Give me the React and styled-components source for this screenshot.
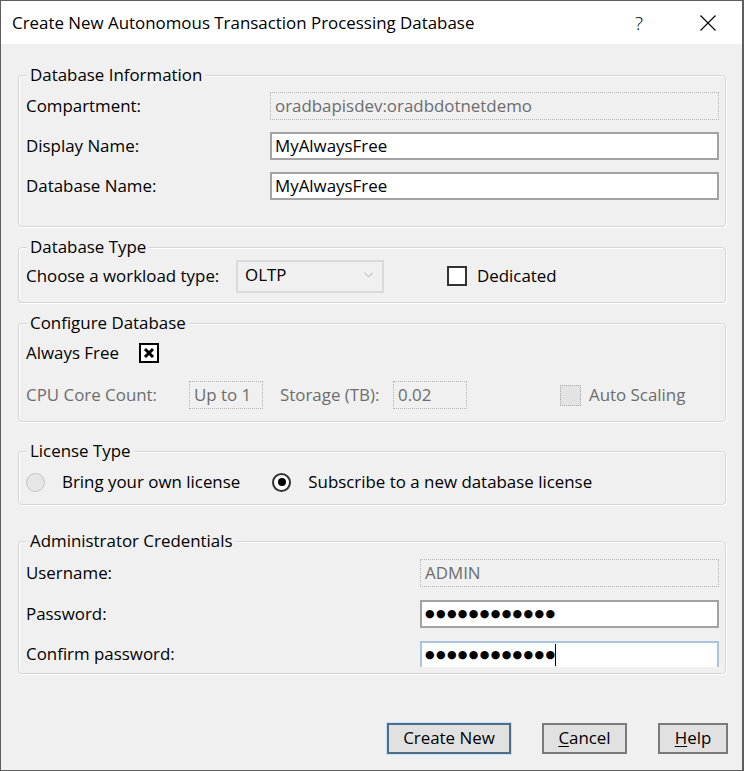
import React from 'react';
import styled, { createGlobalStyle } from 'styled-components';

const GlobalStyle = createGlobalStyle`
  html, body {
    margin: 0;
    padding: 0;
    background: #f0f0f0;
  }
  body {
    font-family: "Open Sans", "Noto Sans", sans-serif;
    font-size: 16.9px;
    color: #000;
  }
  * {
    box-sizing: border-box;
  }
`;

const Window = styled.div`
  width: 744px;
  height: 771px;
  border: 1px solid #5e5e5e;
  border-right-width: 2px;
  background: #f0f0f0;
  display: flex;
  flex-direction: column;
  overflow: hidden;
`;

const TitleBar = styled.div`
  height: 43px;
  flex-shrink: 0;
  background: #fff;
  display: flex;
  align-items: center;
  padding-left: 11px;
  padding-right: 26px;
`;

const Title = styled.div`
  flex: 1;
  line-height: 22px;
`;

const HelpGlyph = styled.span`
  font-size: 19px;
  font-weight: 300;
  line-height: 22px;
  margin-right: 57px;
`;

const Body = styled.div`
  flex: 1;
  display: flex;
  flex-direction: column;
  padding: 20px 16px 0 17px;
`;

const Group = styled.fieldset`
  margin: ${(p) => p.$mt || 0}px 0 0;
  padding: 0 6px ${(p) => p.$pb || 0}px 7px;
  border: 1px solid #d6d6d6;
  border-radius: 4px;
  box-shadow: inset 1px 1px 0 #fff, 1px 1px 0 #fff;
  min-width: 0;
`;

const Legend = styled.legend`
  margin-left: 1px;
  padding: 0 3px;
  line-height: 22px;
  background: #f0f0f0;
`;

const FormRow = styled.div`
  display: flex;
  align-items: center;
  height: ${(p) => p.$h || 40}px;
  margin-top: ${(p) => p.$mt || 0}px;
`;

const Label = styled.span`
  flex-shrink: 0;
  width: ${(p) => (p.$w ? `${p.$w}px` : 'auto')};
  margin-left: ${(p) => p.$ml || 0}px;
  color: ${(p) => (p.$disabled ? '#6d6d6d' : '#000')};
  line-height: 22px;
  white-space: nowrap;
`;

const TextBox = styled.div`
  flex: ${(p) => (p.$w ? 'none' : 1)};
  width: ${(p) => (p.$w ? `${p.$w}px` : 'auto')};
  height: ${(p) => (p.$clipped ? 26 : 28)}px;
  align-self: ${(p) => (p.$clipped ? 'flex-start' : 'center')};
  margin-top: ${(p) => (p.$clipped ? 7 : 0)}px;
  display: flex;
  align-items: center;
  padding-left: 3px;
  background: #fff;
  border: 2px solid ${(p) => (p.$focused ? '#a9c4dc' : '#a3a3a3')};
  border-bottom-width: ${(p) => (p.$clipped ? 0 : 2)}px;
  line-height: 22px;
  white-space: nowrap;

  &[data-disabled='true'] {
    background: #f0f0f0;
    border: 1px dotted #b3b3b3;
    padding-left: 4px;
    color: #6d6d6d;
  }
`;

const Dots = styled.span`
  font-family: "DejaVu Sans", sans-serif;
  font-size: 11px;
  letter-spacing: 1.35px;
  line-height: 22px;
`;

const Caret = styled.span`
  width: 1px;
  height: 22px;
  background: #000;
  margin-left: -1px;
`;

const Select = styled.div`
  flex-shrink: 0;
  width: 148px;
  height: 33px;
  border: 2px solid #dadada;
  background: #f0f0f0;
  display: flex;
  align-items: center;
  justify-content: space-between;
  padding: 0 9px 2px 7px;
  line-height: 22px;
`;

const Box = styled.span`
  flex-shrink: 0;
  width: 20px;
  height: 20px;
  margin-left: ${(p) => p.$ml || 0}px;
  margin-right: ${(p) => p.$mr || 0}px;
  display: flex;
  align-items: center;
  justify-content: center;
  background: #fff;
  border: 2px solid ${(p) => (p.$checked ? '#000' : '#333')};

  &[data-disabled='true'] {
    width: 21px;
    height: 21px;
    background: #e3e3e3;
    border: 1px dotted #a8a8a8;
  }
`;

const Radio = styled.span`
  flex-shrink: 0;
  width: 19px;
  height: 19px;
  border-radius: 50%;
  margin-left: ${(p) => p.$ml || 0}px;
  margin-right: 17px;
  display: flex;
  align-items: center;
  justify-content: center;
  background: ${(p) => (p.$disabled ? '#e6e6e6' : '#fff')};
  border: ${(p) => (p.$disabled ? '1px solid #c4c4c4' : '2px solid #333')};

  &::after {
    content: '';
    display: ${(p) => (p.$checked ? 'block' : 'none')};
    width: 8px;
    height: 8px;
    border-radius: 50%;
    background: #000;
  }
`;

const ButtonRow = styled.div`
  display: flex;
  justify-content: flex-end;
  gap: 31px;
  margin-top: 49px;
  margin-right: -2px;
`;

const Button = styled.button`
  width: ${(p) => p.$w}px;
  height: 31px;
  padding: 0 0 1px;
  font: inherit;
  line-height: 22px;
  color: #000;
  background: #e1e1e1;
  border: 2px solid ${(p) => (p.$default ? '#4e6d88' : '#7a7a7a')};
  box-shadow: ${(p) => (p.$default ? '0 0 0 1px #c4e2f6' : 'none')};
`;

const Key = styled.span`
  text-decoration: underline;
  text-underline-offset: 2px;
`;

function CloseIcon() {
  return (
    <svg width="16" height="16" viewBox="0 0 16 16">
      <path d="M0.5 0.5 L15.5 15.5 M15.5 0.5 L0.5 15.5" stroke="#000" strokeWidth="1.1" fill="none" />
    </svg>
  );
}

function Chevron() {
  return (
    <svg width="9" height="6" viewBox="0 0 9 6">
      <path d="M0.5 0.8 L4.5 4.8 L8.5 0.8" stroke="#a8a8a8" strokeWidth="1" fill="none" />
    </svg>
  );
}

function CrossMark() {
  return (
    <svg width="12" height="12" viewBox="0 0 12 12">
      <path d="M2 2 L10 10 M10 2 L2 10" stroke="#000" strokeWidth="3" fill="none" />
    </svg>
  );
}

const dots = '●●●●●●●●●●●●';

export default function App() {
  return (
    <>
      <GlobalStyle />
      <Window>
        <TitleBar>
          <Title>Create New Autonomous Transaction Processing Database</Title>
          <HelpGlyph>?</HelpGlyph>
          <CloseIcon />
        </TitleBar>
        <Body>
          <Group $pb={20}>
            <Legend>Database Information</Legend>
            <FormRow>
              <Label $w={244}>Compartment:</Label>
              <TextBox data-disabled="true">oradbapisdev:oradbdotnetdemo</TextBox>
            </FormRow>
            <FormRow>
              <Label $w={244}>Display Name:</Label>
              <TextBox>MyAlwaysFree</TextBox>
            </FormRow>
            <FormRow>
              <Label $w={244}>Database Name:</Label>
              <TextBox>MyAlwaysFree</TextBox>
            </FormRow>
          </Group>

          <Group $mt={9} $pb={8}>
            <Legend>Database Type</Legend>
            <FormRow $h={36}>
              <Label $w={210}>Choose a workload type:</Label>
              <Select>
                <span>OLTP</span>
                <Chevron />
              </Select>
              <Box $ml={63} $mr={10} />
              <Label>Dedicated</Label>
            </FormRow>
          </Group>

          <Group $mt={9} $pb={11}>
            <Legend>Configure Database</Legend>
            <FormRow $h={38}>
              <Label>Always Free</Label>
              <Box $checked $ml={20}>
                <CrossMark />
              </Box>
            </FormRow>
            <FormRow $h={30} $mt={8}>
              <Label $w={163} $disabled>CPU Core Count:</Label>
              <TextBox data-disabled="true" $w={74}>Up to 1</TextBox>
              <Label $w={113} $ml={17} $disabled>Storage (TB):</Label>
              <TextBox data-disabled="true" $w={74}>0.02</TextBox>
              <Box data-disabled="true" $ml={93} $mr={8} />
              <Label $disabled>Auto Scaling</Label>
            </FormRow>
          </Group>

          <Group $mt={18} $pb={2}>
            <Legend>License Type</Legend>
            <FormRow>
              <Radio $disabled />
              <Label>Bring your own license</Label>
              <Radio $checked $ml={32} />
              <Label>Subscribe to a new database license</Label>
            </FormRow>
          </Group>

          <Group $mt={25}>
            <Legend>Administrator Credentials</Legend>
            <FormRow $h={41}>
              <Label $w={394}>Username:</Label>
              <TextBox data-disabled="true">ADMIN</TextBox>
            </FormRow>
            <FormRow $h={41}>
              <Label $w={394}>Password:</Label>
              <TextBox>
                <Dots>{dots}</Dots>
              </TextBox>
            </FormRow>
            <FormRow $h={39}>
              <Label $w={394}>Confirm password:</Label>
              <TextBox $focused $clipped>
                <Dots>{dots}</Dots>
                <Caret />
              </TextBox>
            </FormRow>
          </Group>

          <ButtonRow>
            <Button $w={124} $default>Create New</Button>
            <Button $w={85}>
              <Key>C</Key>ancel
            </Button>
            <Button $w={70}>
              <Key>H</Key>elp
            </Button>
          </ButtonRow>
        </Body>
      </Window>
    </>
  );
}
